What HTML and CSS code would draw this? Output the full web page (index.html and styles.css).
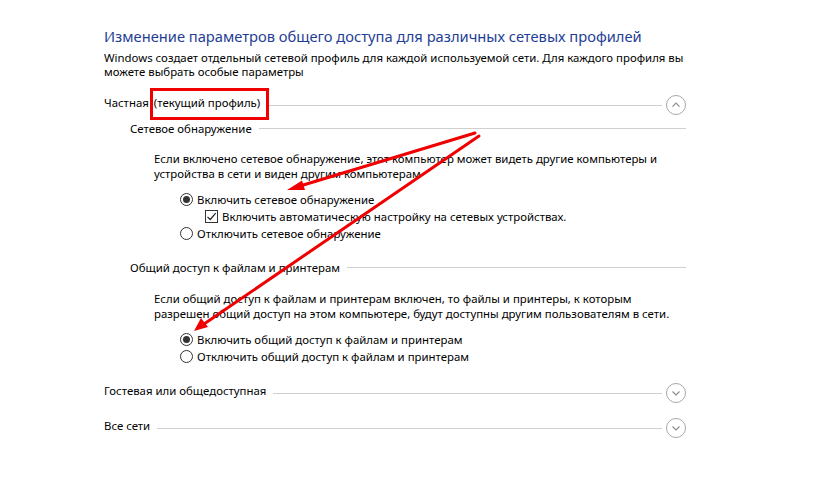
FILE: index.html
```html
<!DOCTYPE html>
<html lang="ru">
<head>
<meta charset="utf-8">
<title>Изменение параметров общего доступа</title>
<link rel="stylesheet" href="styles.css">
</head>
<body>
<div class="page">
  <h1 class="title">Изменение параметров общего доступа для различных сетевых профилей</h1>
  <p class="desc">Windows создает отдельный сетевой профиль для каждой используемой сети. Для каждого профиля вы<br>можете выбрать особые параметры</p>

  <div class="profile profile-first">
    <span class="profile-name">Частная <span class="mark">(текущий профиль)</span></span>
    <span class="rule rule-profile"></span>
    <svg class="toggle" width="20" height="20" viewBox="0 0 20 20"><circle cx="10" cy="10" r="9.5" fill="none" stroke="#a8a8a8"/><path d="M6.5 11.7 L10 8.2 L13.5 11.7" fill="none" stroke="#8c8c8c" stroke-width="1.2"/></svg>
  </div>

  <div class="section">
    <div class="section-head"><span>Сетевое обнаружение</span><span class="rule"></span></div>
    <p class="para">Если включено сетевое обнаружение, этот компьютер может видеть другие компьютеры и<br>устройства в сети и виден другим компьютерам</p>
    <div class="options">
      <div class="option"><span class="radio checked"></span><span>Включить сетевое обнаружение</span></div>
      <div class="option sub"><span class="check"><svg width="11" height="11" viewBox="0 0 11 11"><path d="M1.5 5.8 L4.2 8.5 L9.7 2.2" fill="none" stroke="#222" stroke-width="1.2"/></svg></span><span>Включить автоматическую настройку на сетевых устройствах.</span></div>
      <div class="option"><span class="radio"></span><span>Отключить сетевое обнаружение</span></div>
    </div>
  </div>

  <div class="section section-second">
    <div class="section-head"><span>Общий доступ к файлам и принтерам</span><span class="rule"></span></div>
    <p class="para">Если общий доступ к файлам и принтерам включен, то файлы и принтеры, к которым<br>разрешен общий доступ на этом компьютере, будут доступны другим пользователям в сети.</p>
    <div class="options">
      <div class="option"><span class="radio checked"></span><span>Включить общий доступ к файлам и принтерам</span></div>
      <div class="option"><span class="radio"></span><span>Отключить общий доступ к файлам и принтерам</span></div>
    </div>
  </div>

  <div class="profile profile-guest">
    <span class="profile-name">Гостевая или общедоступная</span>
    <span class="rule rule-profile"></span>
    <svg class="toggle" width="20" height="20" viewBox="0 0 20 20"><circle cx="10" cy="10" r="9.5" fill="none" stroke="#a8a8a8"/><path d="M6.5 8.5 L10 12 L13.5 8.5" fill="none" stroke="#8c8c8c" stroke-width="1.2"/></svg>
  </div>

  <div class="profile profile-all">
    <span class="profile-name">Все сети</span>
    <span class="rule rule-profile"></span>
    <svg class="toggle" width="20" height="20" viewBox="0 0 20 20"><circle cx="10" cy="10" r="9.5" fill="none" stroke="#a8a8a8"/><path d="M6.5 8.5 L10 12 L13.5 8.5" fill="none" stroke="#8c8c8c" stroke-width="1.2"/></svg>
  </div>
</div>

<svg class="annot" width="817" height="498" viewBox="0 0 817 498">
  <rect x="151.5" y="89.5" width="116" height="29" fill="none" stroke="#f00000" stroke-width="3"/>
  <line x1="475" y1="133" x2="300" y2="186" stroke="#f00000" stroke-width="3" stroke-linecap="round"/>
  <polygon points="287,190 302,180.5 305,190" fill="#f00000"/>
  <line x1="479" y1="136" x2="204" y2="324" stroke="#f00000" stroke-width="3" stroke-linecap="round"/>
  <polygon points="194,331 201,318 208,327" fill="#f00000"/>
</svg>
</body>
</html>
```

FILE: styles.css
```css
html, body {
  margin: 0;
  padding: 0;
  background: #ffffff;
}

body {
  position: relative;
  width: 817px;
  height: 498px;
  overflow: hidden;
  font-family: "Noto Sans", "Open Sans", sans-serif;
  font-size: 11.4px;
  color: #000000;
}

.page {
  width: 582px;
  padding: 24.5px 0 0 104px;
}

.title {
  margin: 0;
  font-size: 14.7px;
  font-weight: normal;
  line-height: 22px;
  color: #1f3e96;
  white-space: nowrap;
}

.desc {
  margin: 4.5px 0 0;
  line-height: 14px;
  white-space: nowrap;
}

.profile {
  display: flex;
  align-items: center;
  height: 22px;
}

.profile-first { margin-top: 15px; }
.profile-guest { margin-top: 17px; }
.profile-all { margin-top: 13px; }

.profile-name {
  align-self: flex-start;
  line-height: 15px;
  padding-top: 0.5px;
  white-space: nowrap;
}

.mark {
  padding-left: 2px;
}

.rule {
  flex: 1;
  height: 1px;
  background: #cfcfcf;
  margin-left: 7px;
}

.rule-profile {
  margin-right: 4px;
}

.toggle {
  flex: none;
  display: block;
}

.section {
  margin-top: 5px;
  padding-left: 26px;
}

.section-second {
  margin-top: 18.5px;
}

.section-head {
  display: flex;
  align-items: center;
  line-height: 15px;
  white-space: nowrap;
}

.para {
  margin: 14.5px 0 0 24px;
  line-height: 15px;
  white-space: nowrap;
}

.section-second .para {
  margin-top: 16px;
}

.options {
  margin: 10px 0 0 50px;
}

.option {
  display: flex;
  align-items: center;
  height: 17px;
  line-height: 17px;
  white-space: nowrap;
}

.option.sub {
  padding-left: 25px;
}

.radio {
  flex: none;
  box-sizing: border-box;
  width: 13px;
  height: 13px;
  border: 1px solid #333333;
  border-radius: 50%;
  margin-right: 4px;
  display: flex;
  align-items: center;
  justify-content: center;
}

.radio.checked::after {
  content: "";
  width: 7px;
  height: 7px;
  border-radius: 50%;
  background: #333333;
}

.check {
  flex: none;
  box-sizing: border-box;
  width: 13px;
  height: 13px;
  border: 1px solid #333333;
  margin-right: 4px;
  display: flex;
  align-items: center;
  justify-content: center;
}

.check svg {
  display: block;
}

.annot {
  position: absolute;
  left: 0;
  top: 0;
  pointer-events: none;
}
```
